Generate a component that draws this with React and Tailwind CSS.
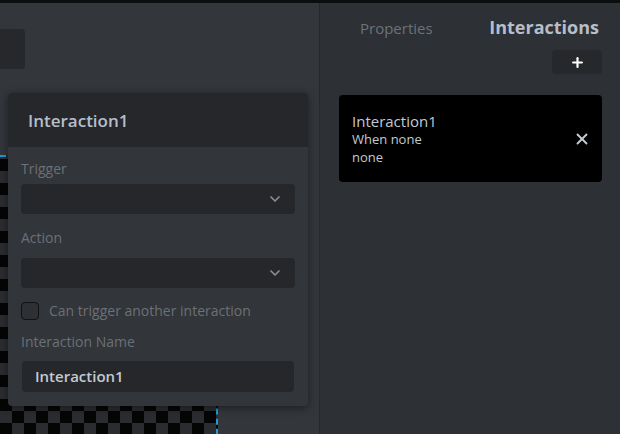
import { ChevronDown, Plus, X } from 'lucide-react'

function Select() {
  return (
    <div className="flex h-[30px] items-center justify-end rounded-[4px] bg-[#26272b] pr-[12px]">
      <ChevronDown size={16} strokeWidth={2.5} className="text-[#8a8f96]" />
    </div>
  )
}

export default function App() {
  return (
    <div className="flex h-[434px] w-[620px] flex-col overflow-hidden bg-[#33363b] font-['Open_Sans',sans-serif]">
      <div className="h-[3px] bg-[#0c0d0f]" />
      <div className="flex flex-1">
        {/* Canvas */}
        <div className="relative w-[320px] border-r border-[#26282b] bg-[#33363b]">
          <div className="absolute left-[-10px] top-[26px] h-[40px] w-[35px] rounded-[4px] bg-[#27282c]" />
          <div className="absolute left-0 top-[152px] h-[290px] w-[218px] border-r-2 border-t-2 border-dashed border-r-[#1e9bd7] border-t-[#1e9bd7] bg-[conic-gradient(#2b2c30_25%,#050505_0_50%,#2b2c30_0_75%,#050505_0)] bg-[length:24px_24px] bg-[position:0px_2px]" />

          {/* Interaction popup */}
          <div className="absolute left-[8px] top-[90px] w-[300px] overflow-hidden rounded-[4px] bg-[#323539] shadow-[0_2px_8px_rgba(0,0,0,0.45)]">
            <div className="flex h-[54px] items-center bg-[#26272b] pl-[20px] pt-[2px] text-[17px] font-semibold text-[#b6bec9]">
              Interaction1
            </div>
            <div className="flex flex-col px-[13px] pb-[14px] pt-[11px]">
              <div className="text-[14px] text-[#6c7077]">Trigger</div>
              <div className="mt-[5px]"><Select /></div>
              <div className="mt-[13px] text-[14px] text-[#6c7077]">Action</div>
              <div className="mt-[10px]"><Select /></div>
              <div className="mt-[12px] flex items-center gap-[10px]">
                <div className="h-[18px] w-[18px] rounded-[4px] border border-[#111214] bg-[#2e3034]" />
                <span className="text-[14px] text-[#6c7077]">Can trigger another interaction</span>
              </div>
              <div className="mt-[10px] text-[14px] text-[#6c7077]">Interaction Name</div>
              <div className="ml-[1px] mr-[1px] mt-[9px] flex h-[31px] items-center rounded-[4px] bg-[#26272b] pl-[13px] text-[15px] font-semibold text-[#c3cad3]">
                Interaction1
              </div>
            </div>
          </div>
        </div>

        {/* Right panel */}
        <div className="flex w-[300px] flex-col bg-[#2d3034] pl-[19px] pr-[18px]">
          <div className="mt-[11px] flex items-baseline">
            <span className="ml-[21px] text-[15px] text-[#6c727a]">Properties</span>
            <span className="ml-auto mr-[3px] text-[18px] font-bold text-[#b6bec9]">Interactions</span>
          </div>
          <div className="mt-[9px] flex justify-end">
            <div className="flex h-[24px] w-[50px] items-center justify-center rounded-[4px] bg-[#26282b]">
              <Plus size={15} strokeWidth={3.5} className="text-white" />
            </div>
          </div>
          <div className="mt-[21px] flex h-[87px] items-center rounded-[4px] bg-black pl-[13px] pr-[11px]">
            <div className="flex flex-1 flex-col font-medium leading-[18px]">
              <span className="text-[15px] text-[#c3cad3]">Interaction1</span>
              <span className="text-[13px] text-[#c3cad3]">When none</span>
              <span className="text-[13px] text-[#c3cad3]">none</span>
            </div>
            <X size={18} strokeWidth={2.5} className="text-[#c3cad3]" />
          </div>
        </div>
      </div>
    </div>
  )
}
